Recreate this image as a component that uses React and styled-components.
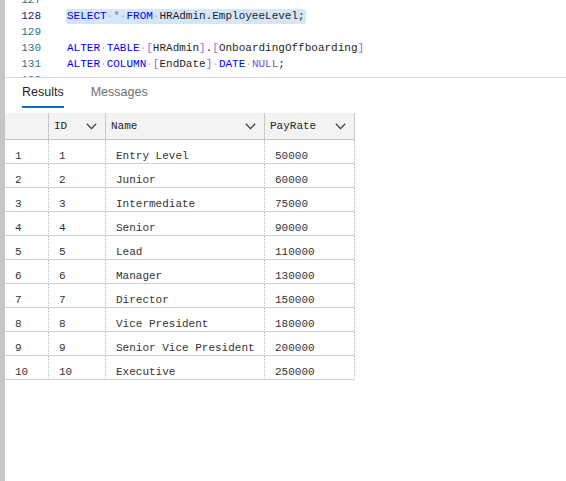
import React from "react";
import styled, { createGlobalStyle } from "styled-components";

const rows = [
  [1, "Entry Level", 50000],
  [2, "Junior", 60000],
  [3, "Intermediate", 75000],
  [4, "Senior", 90000],
  [5, "Lead", 110000],
  [6, "Manager", 130000],
  [7, "Director", 150000],
  [8, "Vice President", 180000],
  [9, "Senior Vice President", 200000],
  [10, "Executive", 250000],
];

const Sp = () => <Dot>·</Dot>;

const Chevron = () => (
  <svg width="11" height="7" viewBox="0 0 11 7">
    <polyline
      points="0.8,0.8 5.5,5.6 10.2,0.8"
      fill="none"
      stroke="#3c3c3c"
      strokeWidth="1.3"
    />
  </svg>
);

const App = () => {
  return (
    <Page>
      <GlobalStyle />
      <SideBar />
      <Main>
        <Editor>
          <Lines>
            <CodeLine>
              <LineNo>127</LineNo>
              <Code />
            </CodeLine>
            <CodeLine>
              <LineNo current>128</LineNo>
              <Code>
                <Selection>
                  <Kw>SELECT</Kw>
                  <Sp />
                  <Op>*</Op>
                  <Sp />
                  <Kw>FROM</Kw>
                  <Sp />
                  HRAdmin.EmployeeLevel;
                </Selection>
              </Code>
            </CodeLine>
            <CodeLine>
              <LineNo>129</LineNo>
              <Code />
            </CodeLine>
            <CodeLine>
              <LineNo>130</LineNo>
              <Code>
                <Kw>ALTER</Kw>
                <Sp />
                <Kw>TABLE</Kw>
                <Sp />
                <Br>[</Br>HRAdmin<Br>]</Br>.<Br>[</Br>OnboardingOffboarding
                <Br>]</Br>
              </Code>
            </CodeLine>
            <CodeLine>
              <LineNo>131</LineNo>
              <Code>
                <Kw>ALTER</Kw>
                <Sp />
                <Kw>COLUMN</Kw>
                <Sp />
                <Br>[</Br>EndDate<Br>]</Br>
                <Sp />
                <Kw>DATE</Kw>
                <Sp />
                <Const>NULL</Const>;
              </Code>
            </CodeLine>
            <CodeLine>
              <LineNo>132</LineNo>
              <Code />
            </CodeLine>
          </Lines>
        </Editor>

        <Tabs>
          <Tab active>Results</Tab>
          <Tab>Messages</Tab>
        </Tabs>

        <Grid>
          <HeadCell />
          <HeadCell>
            ID
            <Chevron />
          </HeadCell>
          <HeadCell>
            Name
            <Chevron />
          </HeadCell>
          <HeadCell>
            PayRate
            <Chevron />
          </HeadCell>
          {rows.map(([id, name, pay]) => (
            <React.Fragment key={id}>
              <Cell>{id}</Cell>
              <Cell>{id}</Cell>
              <Cell>{name}</Cell>
              <Cell>{pay}</Cell>
            </React.Fragment>
          ))}
        </Grid>
      </Main>
    </Page>
  );
};

export default App;

const GlobalStyle = createGlobalStyle`
  body {
    margin: 0;
    background: #ffffff;
  }
`;

const Page = styled.div`
  display: flex;
  min-height: 100vh;
  background: #ffffff;
`;

const SideBar = styled.div`
  width: 5px;
  flex-shrink: 0;
  background: #c6c6c6;
`;

const Main = styled.div`
  flex: 1;
  display: flex;
  flex-direction: column;
`;

const Editor = styled.div`
  height: 77px;
  overflow: hidden;
  border-bottom: 1px solid #dadada;
`;

const Lines = styled.div`
  margin-top: -8px;
  font-family: "Liberation Mono", monospace;
  font-size: 11px;
`;

const CodeLine = styled.div`
  display: grid;
  grid-template-columns: 36px 1fr;
  column-gap: 26px;
  height: 16px;
  line-height: 16px;
  white-space: pre;
`;

const LineNo = styled.div`
  text-align: right;
  color: ${(p) => (p.current ? "#0b216f" : "#237893")};
`;

const Code = styled.div`
  color: #1f1f1f;
`;

const Selection = styled.span`
  display: inline-block;
  line-height: 15px;
  margin-left: -1px;
  padding: 0 1px;
  border-radius: 3px;
  background: #d3e6fa;
`;

const Kw = styled.span`
  color: #0000ff;
`;

const Op = styled.span`
  color: #777777;
`;

const Br = styled.span`
  color: #9070d8;
`;

const Const = styled.span`
  color: #6b55e0;
`;

const Dot = styled.span`
  color: #b4b4b4;
`;

const Tabs = styled.div`
  height: 35px;
  display: flex;
  align-items: flex-start;
  gap: 27px;
  padding-left: 17px;
  font-family: "Liberation Sans", Arial, sans-serif;
  font-size: 12.5px;
`;

const Tab = styled.div`
  padding: 6px 0 6px;
  line-height: 16px;
  color: ${(p) => (p.active ? "#1f1f1f" : "#6f6f6f")};
  border-bottom: 2px solid ${(p) => (p.active ? "#0a6cc4" : "transparent")};
`;

const Grid = styled.div`
  display: grid;
  grid-template-columns: 44px 57px 159px 90px;
  width: 350px;
  font-family: "Liberation Mono", monospace;
  font-size: 11px;
  color: #333333;
`;

const HeadCell = styled.div`
  box-sizing: border-box;
  height: 27px;
  display: flex;
  align-items: center;
  justify-content: space-between;
  padding: 0 8px 0 5px;
  background: #f3f3f3;
  border-right: 1px solid #cacaca;
  border-bottom: 1px solid #c4c4c4;
  color: #1f1f1f;
  line-height: 14px;
`;

const Cell = styled.div`
  box-sizing: border-box;
  height: 24px;
  padding: 9px 0 0 10px;
  line-height: 14px;
  white-space: pre;
  border-right: 1px dotted #bdbdbd;
  border-bottom: 1px solid #d2d2d2;
`;
